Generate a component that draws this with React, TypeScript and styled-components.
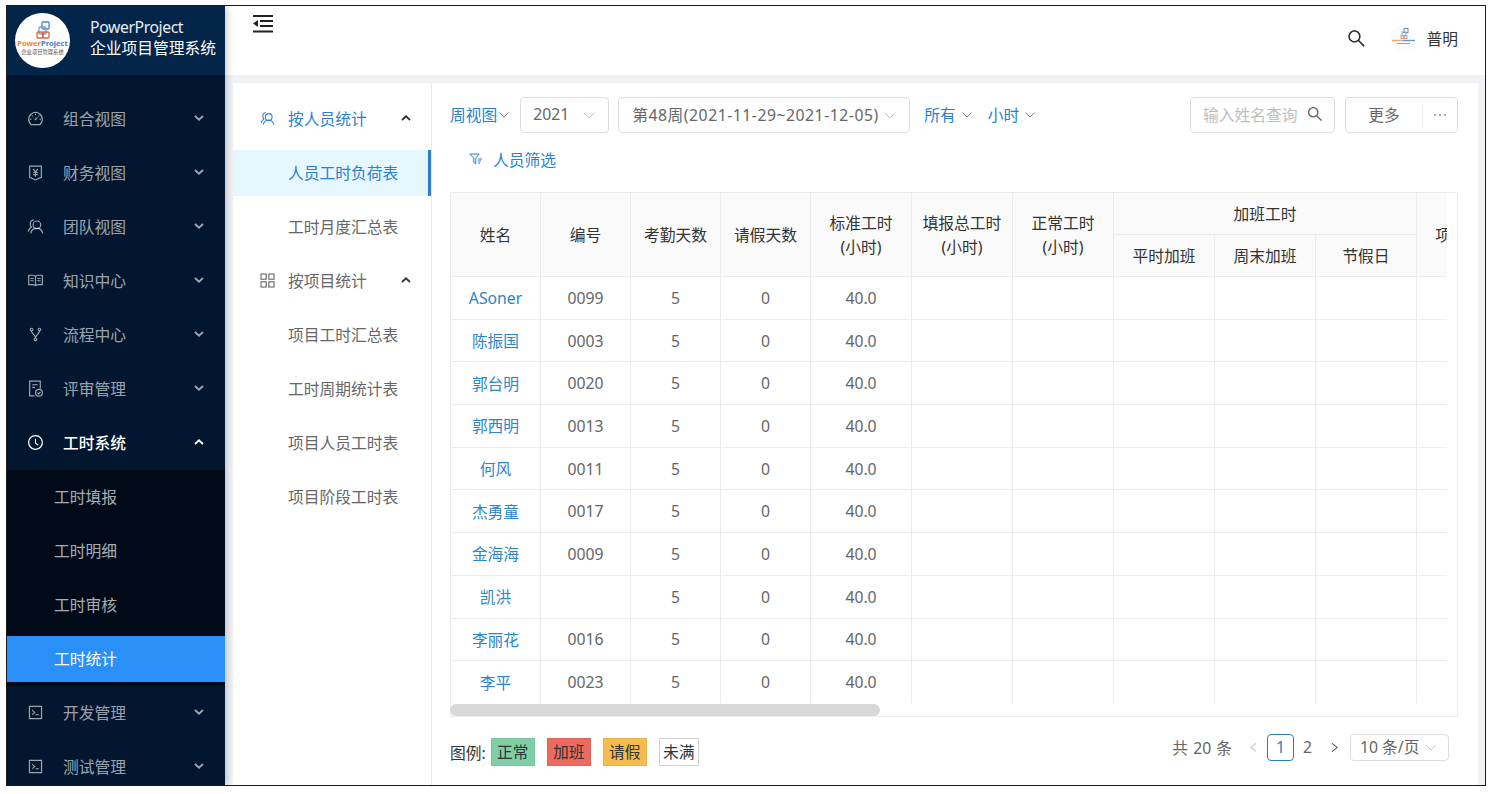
import React from "react";
import styled, { createGlobalStyle } from "styled-components";
import {
  AiOutlineClockCircle,
  AiOutlineCode,
  AiOutlineDashboard,
  AiOutlineEllipsis,
  AiOutlineFork,
  AiOutlineLeft,
  AiOutlineRead,
  AiOutlineRight,
  AiOutlineSearch,
} from "react-icons/ai";

const GlobalStyle = createGlobalStyle`
  html, body {
    margin: 0;
    padding: 0;
    background: #fff;
    overflow: hidden;
    font-family: "Noto Sans", "Noto Sans CJK SC", sans-serif;
    font-size: 15.75px;
  }
  * { box-sizing: border-box; }
`;

const Frame = styled.div`
  display: flex;
  width: 1480px;
  height: 781px;
  margin: 5px 0 0 6px;
  border: 1px solid #1c1c1c;
  overflow: hidden;
`;

const Sidebar = styled.aside`
  position: relative;
  z-index: 2;
  flex: 0 0 218px;
  display: flex;
  flex-direction: column;
  background: #02172f;
  box-shadow: 2px 0 7px rgba(0, 21, 41, 0.22);
`;

const Brand = styled.div`
  flex: 0 0 69px;
  display: flex;
  align-items: center;
  padding-left: 8px;
  background: #03254a;
`;

const LogoCircle = styled.div`
  flex: 0 0 55px;
  width: 55px;
  height: 55px;
  border-radius: 50%;
  background: #fff;
  display: flex;
  flex-direction: column;
  align-items: center;
  padding-top: 8px;
`;

const LogoWord = styled.div`
  font-size: 7.6px;
  line-height: 9px;
  font-weight: 700;
  color: #3f7fc4;
  white-space: nowrap;
  span { color: #e8873a; }
`;

const LogoSmall = styled.div`
  font-size: 5.3px;
  line-height: 8px;
  color: #555;
  white-space: nowrap;
`;

const BrandText = styled.div`
  margin-left: 20px;
  padding-bottom: 6px;
  color: #fff;
  line-height: 21px;
  white-space: nowrap;
  div:first-child { color: #e8edf3; letter-spacing: -0.4px; }
`;

const SideMenu = styled.nav`
  padding-top: 17px;
  display: flex;
  flex-direction: column;
`;

const SideItem = styled.div<{ $open?: boolean }>`
  flex: 0 0 54px;
  height: 54px;
  display: flex;
  align-items: center;
  padding: 0 21px 2px 20px;
  color: ${(p) => (p.$open ? "#fff" : "rgba(255,255,255,0.62)")};
  font-weight: ${(p) => (p.$open ? 500 : 400)};
  svg.lead { flex: 0 0 17px; font-size: 17px; margin-right: 19px; }
  span { flex: 1; }
`;

const SideSub = styled.div`
  background: #000a18;
  padding: 4px 0;
  display: flex;
  flex-direction: column;
  gap: 8px;
`;

const SideSubItem = styled.div<{ $active?: boolean }>`
  height: 46px;
  line-height: 46px;
  padding-left: 47px;
  color: ${(p) => (p.$active ? "#fff" : "rgba(255,255,255,0.68)")};
  background: ${(p) => (p.$active ? "#2a8ff7" : "transparent")};
`;

const Body = styled.div`
  flex: 1;
  min-width: 0;
  display: flex;
  flex-direction: column;
  background: #f0f2f5;
`;

const TopBar = styled.header`
  flex: 0 0 69px;
  display: flex;
  justify-content: space-between;
  background: #fff;
  padding: 9px 27px 0 28px;
  color: #333;
`;

const FoldButton = styled.div`
  width: 20px;
  height: 18px;
`;

const TopRight = styled.div`
  display: flex;
  align-items: center;
  height: 46px;
  svg.search { font-size: 21px; margin-right: 23px; color: #2b2b2b; }
`;

const Avatar = styled.div`
  width: 27px;
  height: 27px;
  margin-right: 10px;
`;

const Panel = styled.div`
  flex: 1;
  min-height: 0;
  margin: 8px 7px 0 8px;
  display: flex;
  background: #fff;
`;

const SubNav = styled.div`
  flex: 0 0 199px;
  display: flex;
  flex-direction: column;
  padding-top: 9px;
  border-right: 1px solid #e9e9e9;
`;

const SubGroup = styled.div<{ $active?: boolean }>`
  flex: 0 0 54px;
  display: flex;
  align-items: center;
  padding: 0 20px 2px 27px;
  color: ${(p) => (p.$active ? "#2b7fd0" : "#666")};
  svg.lead { font-size: 15px; margin-right: 13px; flex: 0 0 15px; }
  span { flex: 1; }
  svg.arrow { color: #333; }
`;

const SubLink = styled.div<{ $active?: boolean }>`
  flex: 0 0 46px;
  line-height: 46px;
  margin: 4px 0;
  padding-left: 55px;
  color: ${(p) => (p.$active ? "#2b7fd0" : "#666")};
  background: ${(p) => (p.$active ? "#e6f7ff" : "transparent")};
  border-right: ${(p) => (p.$active ? "3px solid #2b7fd0" : "none")};
`;

const Content = styled.main`
  flex: 1;
  min-width: 0;
  padding: 14px 20px 0 18px;
`;

const Toolbar = styled.div`
  display: flex;
  align-items: center;
  height: 36px;
`;

const LinkDrop = styled.div<{ $gap?: number; $after?: number }>`
  display: flex;
  align-items: center;
  padding-bottom: 2px;
  color: #2b7fd0;
  margin-right: ${(p) => p.$after ?? 0}px;
  white-space: nowrap;
  svg {
    width: 10px;
    height: 6px;
    margin: 2px 0 0 ${(p) => p.$gap ?? 6}px;
    color: #555;
  }
`;

const SelectBox = styled.div<{ $w: number; $after?: number; $h?: number; $left?: number; $right?: number }>`
  display: flex;
  align-items: center;
  justify-content: space-between;
  flex: 0 0 ${(p) => p.$w}px;
  height: ${(p) => p.$h ?? 36}px;
  margin-right: ${(p) => p.$after ?? 0}px;
  padding: 0 ${(p) => p.$right ?? 13}px 2px ${(p) => p.$left ?? 13}px;
  border: 1px solid #dedede;
  border-radius: 4px;
  color: #666;
  white-space: nowrap;
  svg { color: #c4c4c4; flex: 0 0 12px; margin-top: 2px; }
`;

const WeekLabel = styled.span`
  letter-spacing: 0.52px;
`;

const Spacer = styled.div`
  flex: 1;
`;

const SearchBox = styled.div`
  flex: 0 0 145px;
  height: 36px;
  display: flex;
  align-items: center;
  justify-content: space-between;
  padding: 0 12px 2px;
  margin-right: 10px;
  border: 1px solid #dedede;
  border-radius: 4px;
  color: #bdbdbd;
  svg { font-size: 18px; color: #666; margin-right: -2px; }
`;

const MoreButton = styled.div`
  flex: 0 0 113px;
  height: 36px;
  display: flex;
  align-items: center;
  border: 1px solid #dedede;
  border-radius: 4px;
  color: #666;
  span {
    flex: 0 0 77px;
    text-align: center;
    border-right: 1px solid #eee;
    line-height: 22px;
  }
  svg { flex: 1; font-size: 18px; color: #888; }
`;

const FilterRow = styled.div`
  display: flex;
  align-items: center;
  height: 32px;
  padding-bottom: 2px;
  margin: 11px 0 16px 19px;
  color: #2b7fd0;
  svg { margin-right: 10px; }
`;

const TableFrame = styled.div`
  border: 1px solid #ececec;
  height: 525px;
`;

const TableClip = styled.div`
  width: 996px;
  height: 510px;
  overflow: hidden;
`;

const Grid = styled.table`
  table-layout: fixed;
  width: 1067px;
  border-collapse: separate;
  border-spacing: 0;
  font-size: 15.75px;
`;

const HeadCell = styled.th`
  background: #fafafa;
  font-weight: 400;
  color: #333;
  text-align: center;
  padding: 0;
  line-height: 24px;
  height: 42px;
  overflow: hidden;
  white-space: nowrap;
  border-right: 1px solid #ececec;
  border-bottom: 1px solid #ececec;
`;

const Row = styled.tr`
  height: 42.7px;
`;

const Cell = styled.td`
  padding: 0;
  text-align: center;
  color: #666;
  border-right: 1px solid #ececec;
  border-bottom: 1px solid #ececec;
`;

const NameCell = styled(Cell)`
  color: #2b85c9;
`;

const ScrollTrack = styled.div`
  height: 13px;
  padding-top: 1px;
`;

const ScrollThumb = styled.div`
  width: 430px;
  height: 12px;
  margin-left: -1px;
  border-radius: 6px;
  background: #d8d8d8;
`;

const Footer = styled.div`
  display: flex;
  justify-content: space-between;
  padding: 17px 9px 0 0;
`;

const Legend = styled.div`
  display: flex;
  align-items: center;
  margin-top: 4px;
  color: #333;
  white-space: nowrap;
`;

const LegendTag = styled.div<{ $bg: string; $plain?: boolean }>`
  height: 28px;
  line-height: 26px;
  padding: 0 ${(p) => (p.$plain ? 3.25 : 5.25)}px;
  background: ${(p) => p.$bg};
  border: 1px solid ${(p) => (p.$plain ? "#d0d0d0" : "rgba(0,0,0,0.05)")};
  color: #333;
  & + & { margin-left: 12px; }
`;

const LegendTitle = styled.span`
  margin-right: 5px;
`;

const Pager = styled.div`
  display: flex;
  align-items: center;
  height: 27px;
  color: #666;
  white-space: nowrap;
`;

const PagerArrow = styled.div<{ $dim?: boolean; $w: number }>`
  display: flex;
  align-items: center;
  justify-content: ${(p) => (p.$dim ? "center" : "flex-start")};
  padding-left: ${(p) => (p.$dim ? 0 : 7)}px;
  width: ${(p) => p.$w}px;
  font-size: 13px;
  color: ${(p) => (p.$dim ? "#c8c8c8" : "#555")};
`;

const PagerNum = styled.div<{ $on?: boolean }>`
  width: 27px;
  height: 27px;
  line-height: 25px;
  text-align: center;
  border-radius: 4px;
  border: 1px solid ${(p) => (p.$on ? "#2b7fb8" : "transparent")};
  color: ${(p) => (p.$on ? "#2b7fb8" : "#666")};
`;

const PagerTotal = styled.span`
  word-spacing: 1px;
  margin-right: 8px;
`;

const Chevron = (props: { up?: boolean; bold?: boolean; className?: string }) => (
  <svg
    className={props.className}
    width={props.bold ? 10 : 12}
    height={props.bold ? 6 : 7}
    viewBox={props.bold ? "0 0 10 6" : "0 0 12 7"}
    fill="none"
    stroke="currentColor"
    strokeWidth={props.bold ? 1.9 : 1}
  >
    {props.bold ? (
      <path d={props.up ? "M1 5l4-3.600L9 5" : "M1 1l4 3.600L9 1"} />
    ) : (
      <path d="M.7.8 6 6l5.300-5.200" />
    )}
  </svg>
);

const TeamIcon = (props: { className?: string }) => (
  <svg className={props.className} width="1em" height="1em" viewBox="0 0 16 16" fill="none" stroke="currentColor" strokeWidth="1.1">
    <circle cx="9.3" cy="6.4" r="3.6" />
    <path d="M3.6 14.5c.4-2.7 2.7-4.7 5.7-4.7s5 1.9 5.5 4.7" />
    <path d="M6.3 1.7C4.3 2 3 3.600 3 5.600c0 1.200.4 2.200 1.200 2.900C2.600 9.500 1.500 11 1.200 12.800" />
  </svg>
);

const ShieldIcon = (props: { className?: string }) => (
  <svg className={props.className} width="1em" height="1em" viewBox="0 0 16 16" fill="none" stroke="currentColor" strokeWidth="1.1">
    <path d="M2.500 2h11v10.500L8 15l-5.500-2.500z" />
    <path d="M5.800 4.500 8 7.500l2.200-3M5.800 8h4.400M5.800 10h4.400M8 7.500V12" />
  </svg>
);

const ReviewIcon = (props: { className?: string }) => (
  <svg className={props.className} width="1em" height="1em" viewBox="0 0 16 16" fill="none" stroke="currentColor" strokeWidth="1.1">
    <path d="M7 15H2.500V1h10v7" />
    <path d="M5 4.500h5M5 7h2.500" />
    <circle cx="11.300" cy="12" r="3.200" />
    <path d="m9.900 12 1.100 1.100 1.800-1.900" />
  </svg>
);

const GridIcon = (props: { className?: string }) => (
  <svg className={props.className} width="1em" height="1em" viewBox="0 0 15 15" fill="none" stroke="currentColor" strokeWidth="1.1">
    <rect x="1" y="1" width="5.200" height="5.200" />
    <rect x="8.800" y="1" width="5.200" height="5.200" />
    <rect x="1" y="8.800" width="5.200" height="5.200" />
    <rect x="8.800" y="8.800" width="5.200" height="5.200" />
  </svg>
);

const FilterIcon = () => (
  <svg width="14" height="13" viewBox="0 0 14 13" fill="none" stroke="currentColor" strokeWidth="1">
    <path d="M.8 1h9.400L6.800 5.200v5.600l-2-1.300V5.200z" />
    <path d="M9 6h4M9 8h3M9 10h2" />
  </svg>
);

const LogoMark = () => (
  <svg width="20" height="18" viewBox="0 0 20 18" fill="none" strokeWidth="1.300">
    <rect x="9" y="1" width="7" height="7" rx="1" stroke="#4b86c9" />
    <rect x="6" y="6" width="7" height="7" rx="1" stroke="#6aa3dd" />
    <rect x="4" y="11" width="6" height="6" rx="1" stroke="#d9663d" />
    <rect x="10" y="11" width="6" height="6" rx="1" stroke="#d9663d" />
  </svg>
);

const AvatarMark = () => (
  <svg width="27" height="27" viewBox="0 0 27 27" fill="none">
    <circle cx="13.500" cy="13.500" r="13.500" fill="#fcfcfc" />
    <rect x="14" y="3.500" width="4" height="4" stroke="#6d8db5" />
    <rect x="12" y="7" width="4" height="4" stroke="#8ea9c8" />
    <rect x="11" y="10.500" width="3" height="3" stroke="#d99a80" />
    <rect x="14" y="10.500" width="3" height="3" stroke="#d99a80" />
    <path d="M2 15.500h11" stroke="#e8a878" strokeWidth="1.400" />
    <path d="M13 15.500h12" stroke="#5aa0d0" strokeWidth="1.400" />
    <path d="M7 18.500h13" stroke="#9aa6b2" strokeWidth="1" />
  </svg>
);

const FoldMark = () => (
  <svg width="20" height="18" viewBox="0 0 20 18" fill="#222">
    <rect x="0" y="0" width="20" height="2" />
    <rect x="7" y="5" width="13" height="2" />
    <rect x="7" y="10" width="13" height="2" />
    <rect x="0" y="15.500" width="20" height="2" />
    <path d="M0 8.500 5 5v7z" />
  </svg>
);

const sideTop = [
  { label: "组合视图", icon: <AiOutlineDashboard className="lead" /> },
  { label: "财务视图", icon: <ShieldIcon className="lead" /> },
  { label: "团队视图", icon: <TeamIcon className="lead" /> },
  { label: "知识中心", icon: <AiOutlineRead className="lead" /> },
  { label: "流程中心", icon: <AiOutlineFork className="lead" /> },
  { label: "评审管理", icon: <ReviewIcon className="lead" /> },
];

const rows = [
  { name: "ASoner", no: "0099" },
  { name: "陈振国", no: "0003" },
  { name: "郭台明", no: "0020" },
  { name: "郭西明", no: "0013" },
  { name: "何风", no: "0011" },
  { name: "杰勇童", no: "0017" },
  { name: "金海海", no: "0009" },
  { name: "凯洪", no: "" },
  { name: "李丽花", no: "0016" },
  { name: "李平", no: "0023" },
];

const colWidths = [90, 90, 90, 90, 101, 101, 101, 101, 101, 101, 101];

export default function App() {
  return (
    <>
      <GlobalStyle />
      <Frame>
        <Sidebar>
          <Brand>
            <LogoCircle>
              <LogoMark />
              <LogoWord>
                <span>Power</span>Project
              </LogoWord>
              <LogoSmall>企业项目管理系统</LogoSmall>
            </LogoCircle>
            <BrandText>
              <div>PowerProject</div>
              <div>企业项目管理系统</div>
            </BrandText>
          </Brand>
          <SideMenu>
            {sideTop.map((item) => (
              <SideItem key={item.label}>
                {item.icon}
                <span>{item.label}</span>
                <Chevron bold />
              </SideItem>
            ))}
            <SideItem $open>
              <AiOutlineClockCircle className="lead" />
              <span>工时系统</span>
              <Chevron bold up />
            </SideItem>
            <SideSub>
              <SideSubItem>工时填报</SideSubItem>
              <SideSubItem>工时明细</SideSubItem>
              <SideSubItem>工时审核</SideSubItem>
              <SideSubItem $active>工时统计</SideSubItem>
            </SideSub>
            <SideItem>
              <AiOutlineCode className="lead" />
              <span>开发管理</span>
              <Chevron bold />
            </SideItem>
            <SideItem>
              <AiOutlineCode className="lead" />
              <span>测试管理</span>
              <Chevron bold />
            </SideItem>
          </SideMenu>
        </Sidebar>
        <Body>
          <TopBar>
            <FoldButton>
              <FoldMark />
            </FoldButton>
            <TopRight>
              <AiOutlineSearch className="search" />
              <Avatar>
                <AvatarMark />
              </Avatar>
              普明
            </TopRight>
          </TopBar>
          <Panel>
            <SubNav>
              <SubGroup $active>
                <TeamIcon className="lead" />
                <span>按人员统计</span>
                <Chevron className="arrow" bold up />
              </SubGroup>
              <SubLink $active>人员工时负荷表</SubLink>
              <SubLink>工时月度汇总表</SubLink>
              <SubGroup>
                <GridIcon className="lead" />
                <span>按项目统计</span>
                <Chevron className="arrow" bold up />
              </SubGroup>
              <SubLink>项目工时汇总表</SubLink>
              <SubLink>工时周期统计表</SubLink>
              <SubLink>项目人员工时表</SubLink>
              <SubLink>项目阶段工时表</SubLink>
            </SubNav>
            <Content>
              <Toolbar>
                <LinkDrop $gap={2} $after={11}>
                  周视图
                  <Chevron />
                </LinkDrop>
                <SelectBox $w={89} $after={9} $left={12}>
                  2021
                  <Chevron />
                </SelectBox>
                <SelectBox $w={292} $after={14}>
                  <WeekLabel>第48周(2021-11-29~2021-12-05)</WeekLabel>
                  <Chevron />
                </SelectBox>
                <LinkDrop $after={16}>
                  所有
                  <Chevron />
                </LinkDrop>
                <LinkDrop>
                  小时
                  <Chevron />
                </LinkDrop>
                <Spacer />
                <SearchBox>
                  输入姓名查询
                  <AiOutlineSearch />
                </SearchBox>
                <MoreButton>
                  <span>更多</span>
                  <AiOutlineEllipsis />
                </MoreButton>
              </Toolbar>
              <FilterRow>
                <FilterIcon />
                人员筛选
              </FilterRow>
              <TableFrame>
                <TableClip>
                  <Grid>
                    <colgroup>
                      {colWidths.map((w, i) => (
                        <col key={i} width={w} />
                      ))}
                    </colgroup>
                    <thead>
                      <tr>
                        <HeadCell rowSpan={2}>姓名</HeadCell>
                        <HeadCell rowSpan={2}>编号</HeadCell>
                        <HeadCell rowSpan={2}>考勤天数</HeadCell>
                        <HeadCell rowSpan={2}>请假天数</HeadCell>
                        <HeadCell rowSpan={2}>
                          标准工时
                          <br />
                          (小时)
                        </HeadCell>
                        <HeadCell rowSpan={2}>
                          填报总工时
                          <br />
                          (小时)
                        </HeadCell>
                        <HeadCell rowSpan={2}>
                          正常工时
                          <br />
                          (小时)
                        </HeadCell>
                        <HeadCell colSpan={3}>加班工时</HeadCell>
                        <HeadCell rowSpan={2}>项目工时</HeadCell>
                      </tr>
                      <tr>
                        <HeadCell>平时加班</HeadCell>
                        <HeadCell>周末加班</HeadCell>
                        <HeadCell>节假日</HeadCell>
                      </tr>
                    </thead>
                    <tbody>
                      {rows.map((r) => (
                        <Row key={r.name}>
                          <NameCell>{r.name}</NameCell>
                          <Cell>{r.no}</Cell>
                          <Cell>5</Cell>
                          <Cell>0</Cell>
                          <Cell>40.0</Cell>
                          <Cell />
                          <Cell />
                          <Cell />
                          <Cell />
                          <Cell />
                          <Cell />
                        </Row>
                      ))}
                    </tbody>
                  </Grid>
                </TableClip>
                <ScrollTrack>
                  <ScrollThumb />
                </ScrollTrack>
              </TableFrame>
              <Footer>
                <Legend>
                  <LegendTitle>图例:</LegendTitle>
                  <LegendTag $bg="#7fcfa5">正常</LegendTag>
                  <LegendTag $bg="#ed6a5e">加班</LegendTag>
                  <LegendTag $bg="#f6bc52">请假</LegendTag>
                  <LegendTag $bg="#fff" $plain>未满</LegendTag>
                </Legend>
                <Pager>
                  <PagerTotal>共 20 条</PagerTotal>
                  <PagerArrow $dim $w={27}>
                    <AiOutlineLeft />
                  </PagerArrow>
                  <PagerNum $on>1</PagerNum>
                  <PagerNum>2</PagerNum>
                  <PagerArrow $w={29}>
                    <AiOutlineRight />
                  </PagerArrow>
                  <SelectBox $w={99} $h={27} $left={9} $right={11}>
                    10 条/页
                    <Chevron />
                  </SelectBox>
                </Pager>
              </Footer>
            </Content>
          </Panel>
        </Body>
      </Frame>
    </>
  );
}
